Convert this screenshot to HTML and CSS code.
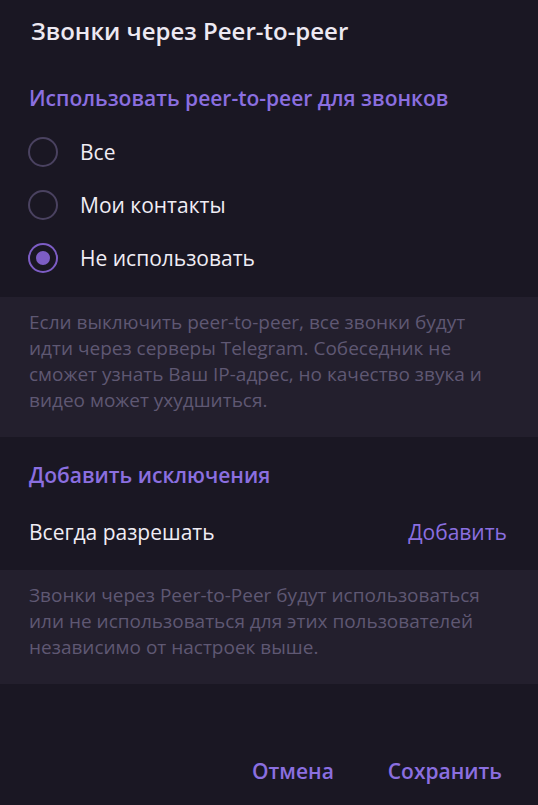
FILE: index.html
```html
<!DOCTYPE html>
<html lang="ru">
<head>
<meta charset="utf-8">
<link rel="stylesheet" href="styles.css">
</head>
<body>
<div class="dialog">
  <div class="title">Звонки через Peer-to-peer</div>
  <div class="section-head">Использовать peer-to-peer для звонков</div>
  <div class="radios">
    <div class="radio"><span class="dot"></span><span class="label">Все</span></div>
    <div class="radio"><span class="dot"></span><span class="label">Мои контакты</span></div>
    <div class="radio checked"><span class="dot"></span><span class="label">Не использовать</span></div>
  </div>
  <div class="about about-1">Если выключить peer-to-peer, все звонки будут идти через серверы Telegram. Собеседник не сможет узнать Ваш IP-адрес, но качество звука и видео может ухудшиться.</div>
  <div class="section-head second">Добавить исключения</div>
  <div class="row">
    <span class="row-label">Всегда разрешать</span>
    <span class="row-action">Добавить</span>
  </div>
  <div class="about about-2">Звонки через Peer-to-Peer будут использоваться или не использоваться для этих пользователей независимо от настроек выше.</div>
  <div class="buttons">
    <span class="btn">Отмена</span>
    <span class="btn">Сохранить</span>
  </div>
</div>
</body>
</html>
```
FILE: styles.css
```css
html, body {
  margin: 0;
  padding: 0;
  background: #1a1723;
}
body {
  font-family: "Open Sans", "Noto Sans", sans-serif;
  color: #f0edf5;
}
.dialog {
  width: 538px;
  height: 805px;
  display: flex;
  flex-direction: column;
  box-sizing: border-box;
}
.title {
  font-size: 24px;
  font-weight: 600;
  padding: 15px 0 0 31px;
  line-height: 32px;
  color: #ede9f2;
}
.section-head {
  font-size: 21px;
  font-weight: 600;
  color: #8b6fe0;
  padding: 0 29px;
  line-height: 28px;
  margin-top: 37px;
}
.section-head.second {
  margin-top: 24px;
}
.radios {
  display: flex;
  flex-direction: column;
  padding: 13px 0 13px 28px;
}
.radio {
  display: flex;
  align-items: center;
  height: 53px;
}
.dot {
  width: 30px;
  height: 30px;
  box-sizing: border-box;
  border: 2.5px solid #4a4260;
  border-radius: 50%;
  display: flex;
  align-items: center;
  justify-content: center;
  flex: none;
}
.radio.checked .dot {
  border-color: #7d5dc5;
}
.radio.checked .dot::after {
  content: "";
  width: 14px;
  height: 14px;
  border-radius: 50%;
  background: #7d5dc5;
}
.label {
  margin-left: 22px;
  font-size: 21px;
}
.about {
  background: #231f2d;
  color: #5f5873;
  font-size: 19px;
  line-height: 26px;
  padding: 12px 45px 24px 29px;
}
.row {
  display: flex;
  justify-content: space-between;
  align-items: center;
  height: 56px;
  padding: 0 31px 0 29px;
  margin-top: 15px;
  margin-bottom: 10px;
  font-size: 21px;
}
.row-action {
  color: #8b6fe0;
}
.buttons {
  margin-top: auto;
  display: flex;
  justify-content: flex-end;
  gap: 54px;
  padding: 0 36px 20px 0;
}
.btn {
  color: #8b6fe0;
  font-size: 21px;
  font-weight: 600;
  line-height: 28px;
}
```
